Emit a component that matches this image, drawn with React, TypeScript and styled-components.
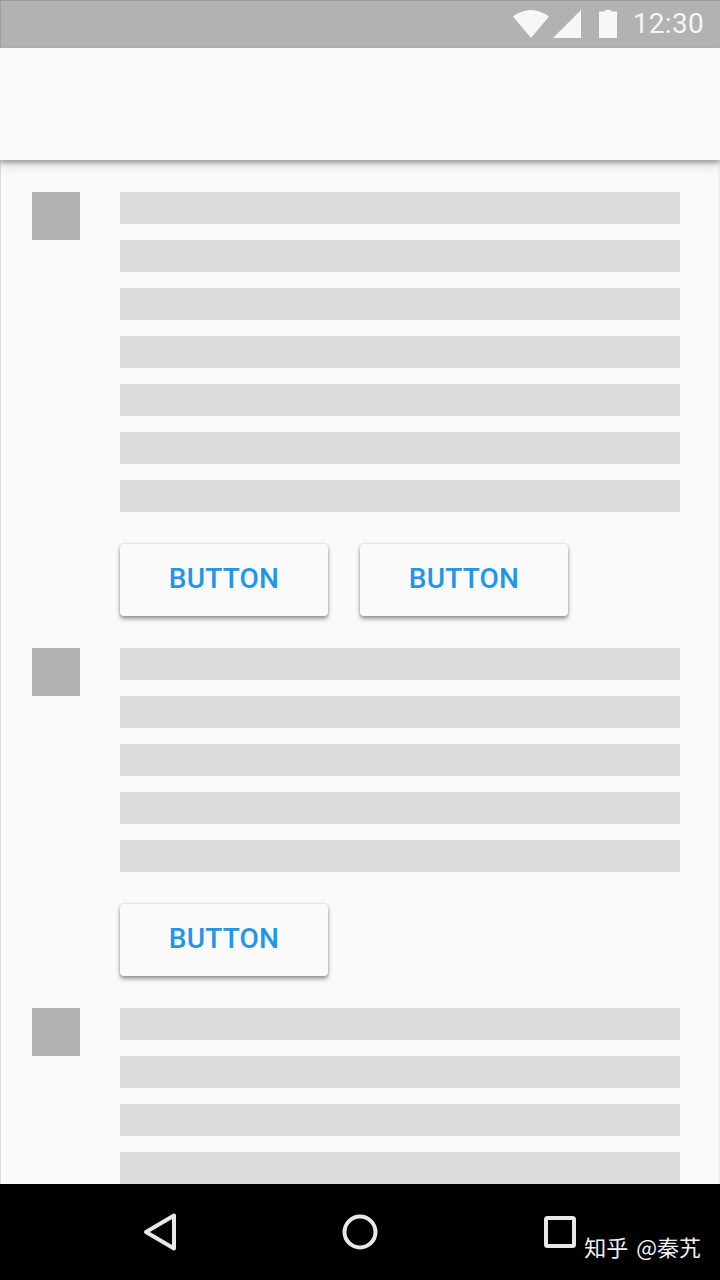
import React from 'react';
import styled, { createGlobalStyle } from 'styled-components';

const GlobalStyle = createGlobalStyle`
  html, body {
    margin: 0;
    padding: 0;
    background: #fafafa;
  }
  body {
    font-family: Roboto, 'Liberation Sans', sans-serif;
  }
`;

const Screen = styled.div`
  width: 720px;
  height: 1280px;
  display: flex;
  flex-direction: column;
  overflow: hidden;
  background: #fafafa;
`;

const StatusBar = styled.div`
  flex: none;
  height: 48px;
  box-sizing: border-box;
  background: #b2b2b2;
  box-shadow: inset 0 1px 0 #9c9c9c, inset 1px 0 0 #9c9c9c;
  display: flex;
  align-items: center;
  justify-content: flex-end;
  padding-right: 16px;
`;

const StatusIcons = styled.svg`
  display: block;
  width: 104px;
  height: 28px;
  margin-right: 16px;
  fill: #f7f7f7;
`;

const Clock = styled.span`
  font-size: 28px;
  line-height: 48px;
  color: #f5f5f5;
  letter-spacing: 0.3px;
`;

const Main = styled.div`
  flex: 1;
  min-height: 0;
  display: flex;
  flex-direction: column;
  box-shadow: inset 1px 0 0 #dcdcdc, inset -2px 0 0 #f0f0f0;
`;

const AppBar = styled.div`
  flex: none;
  height: 112px;
  background: #fafafa;
  box-shadow: 0 3px 4px rgba(0, 0, 0, 0.28), 0 6px 10px rgba(0, 0, 0, 0.12);
  position: relative;
  z-index: 1;
`;

const Content = styled.div`
  flex: 1;
  min-height: 0;
  overflow: hidden;
  padding: 32px 40px 0 32px;
  display: flex;
  flex-direction: column;
  gap: 32px;
`;

const Section = styled.div`
  display: flex;
  gap: 40px;
`;

const Avatar = styled.div`
  flex: none;
  width: 48px;
  height: 48px;
  background: #b2b2b2;
`;

const Body = styled.div`
  flex: 1;
  display: flex;
  flex-direction: column;
  gap: 32px;
`;

const Lines = styled.div`
  display: flex;
  flex-direction: column;
  gap: 16px;
`;

const Line = styled.div`
  height: 32px;
  background: #dcdcdc;
`;

const Buttons = styled.div`
  display: flex;
  gap: 32px;
`;

const Button = styled.button`
  width: 208px;
  height: 72px;
  padding: 0 0 4px;
  border: none;
  border-radius: 4px;
  background: #fafafa;
  color: #2394ec;
  font-family: Roboto, 'Liberation Sans', sans-serif;
  font-size: 28px;
  font-weight: 500;
  letter-spacing: 0.2px;
  box-shadow: 0 3px 4px rgba(0, 0, 0, 0.38), 0 0 3px rgba(0, 0, 0, 0.16);
`;

const NavBar = styled.div`
  flex: none;
  height: 96px;
  background: #000;
  position: relative;
  display: flex;
  align-items: center;
  gap: 152px;
  padding-left: 136px;
`;

const NavIcon = styled.svg`
  display: block;
  width: 48px;
  height: 48px;
  fill: none;
  stroke: #e8e8e8;
  stroke-width: 4;
  stroke-linejoin: round;
`;

const Watermark = styled.span`
  position: absolute;
  right: 19px;
  bottom: 20px;
  font-family: 'Noto Sans CJK SC', sans-serif;
  font-size: 22px;
  line-height: 28px;
  word-spacing: 3px;
  color: #f2f2f2;
`;

const Section1 = [0, 1, 2, 3, 4, 5, 6];
const Section2 = [0, 1, 2, 3, 4];
const Section3 = [0, 1, 2, 3];

const ContentLines: React.FC<{ rows: number[] }> = ({ rows }) => (
  <Lines>
    {rows.map((r) => (
      <Line key={r} />
    ))}
  </Lines>
);

export default function App() {
  return (
    <Screen>
      <GlobalStyle />
      <StatusBar>
        <StatusIcons viewBox="0 0 104 28">
          <path d="M0 6.5 Q18 -6.5 36 6.5 L18 28 Z" />
          <path d="M40 28 L68 0 V28 Z" />
          <path d="M86 1.5 H92 V0 H98 V1.5 H104 V28 H86 Z" />
        </StatusIcons>
        <Clock>12:30</Clock>
      </StatusBar>
      <Main>
        <AppBar />
        <Content>
          <Section>
            <Avatar />
            <Body>
              <ContentLines rows={Section1} />
              <Buttons>
                <Button>BUTTON</Button>
                <Button>BUTTON</Button>
              </Buttons>
            </Body>
          </Section>
          <Section>
            <Avatar />
            <Body>
              <ContentLines rows={Section2} />
              <Buttons>
                <Button>BUTTON</Button>
              </Buttons>
            </Body>
          </Section>
          <Section>
            <Avatar />
            <Body>
              <ContentLines rows={Section3} />
            </Body>
          </Section>
        </Content>
      </Main>
      <NavBar>
        <NavIcon viewBox="0 0 48 48">
          <path d="M10 24 L38 7.5 V40.5 Z" />
        </NavIcon>
        <NavIcon viewBox="0 0 48 48">
          <circle cx="24" cy="24" r="15.5" />
        </NavIcon>
        <NavIcon viewBox="0 0 48 48">
          <rect x="10" y="10" width="28" height="28" rx="1.5" />
        </NavIcon>
        <Watermark>知乎 @秦艽</Watermark>
      </NavBar>
    </Screen>
  );
}
